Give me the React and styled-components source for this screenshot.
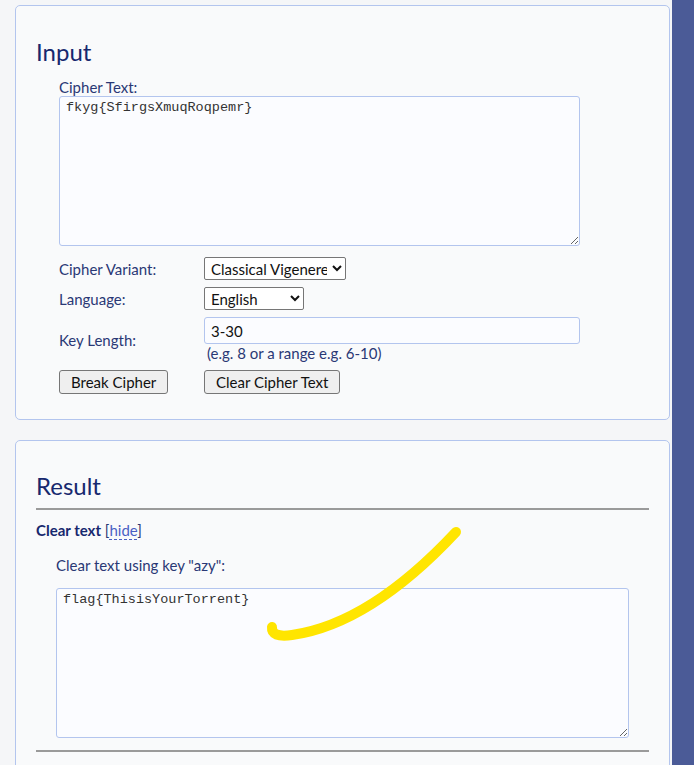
import React from "react";
import styled, { createGlobalStyle } from "styled-components";

const GlobalStyle = createGlobalStyle`
  html, body {
    margin: 0;
    padding: 0;
    background: #f5f6f8;
    font-family: "Lato", "Noto Sans", sans-serif;
  }
`;

const Page = styled.div`
  display: flex;
  min-height: 765px;
  position: relative;
  overflow: hidden;
`;

const Main = styled.div`
  flex: 1;
  padding: 5px 2px 0 15px;
  display: flex;
  flex-direction: column;
  gap: 20px;
`;

const SideStrip = styled.div`
  width: 22px;
  background: #4b5b97;
`;

const Panel = styled.section`
  border: 1px solid #b3c5ee;
  border-radius: 5px;
  background: #f9fafb;
  padding: 0 20px ${(p) => p.$bottom || 25}px;
`;

const Heading = styled.h2`
  font-weight: 400;
  font-size: 24px;
  line-height: 30px;
  color: #17286e;
  margin: ${(p) => p.$top || 31}px 0 0;
`;

const Fields = styled.div`
  margin-left: 23px;
  margin-top: 11px;
`;

const FieldLabel = styled.div`
  font-size: 15px;
  line-height: 18px;
  color: #2a3875;
`;

const Area = styled.textarea`
  display: block;
  box-sizing: border-box;
  width: ${(p) => p.$width}px;
  height: 150px;
  margin: 0;
  padding: 3px 6px;
  border: 1px solid #b3c5ee;
  border-radius: 3px;
  background: #fbfcff;
  font-family: "Liberation Mono", monospace;
  font-size: 13.5px;
  color: #333;
  resize: vertical;
`;

const Grid = styled.div`
  display: grid;
  grid-template-columns: 145px 1fr;
  align-items: center;
  row-gap: 7px;
  margin-top: 11px;
`;

const RowLabel = styled.div`
  font-size: 15px;
  color: #2a3875;
`;

const Select = styled.select`
  justify-self: start;
  box-sizing: border-box;
  height: 23px;
  width: ${(p) => p.$width}px;
  font-family: "Lato", sans-serif;
  font-size: 15px;
  color: #111;
  background: #fff;
  border: 1px solid #767676;
  border-radius: 2px;
  padding: 0 2px;
`;

const KeyBox = styled.div`
  display: flex;
  flex-direction: column;
`;

const TextInput = styled.input`
  box-sizing: border-box;
  width: 376px;
  height: 27px;
  margin: 0;
  padding: 0 6px;
  border: 1px solid #b3c5ee;
  border-radius: 3px;
  background: #fbfcff;
  font-family: "Lato", sans-serif;
  font-size: 15px;
  color: #111;
`;

const Hint = styled.div`
  font-size: 15px;
  line-height: 19px;
  color: #2a3875;
  padding-left: 3px;
`;

const Button = styled.button`
  justify-self: start;
  box-sizing: border-box;
  height: 24px;
  padding: 0 11px;
  font-family: "Lato", sans-serif;
  font-size: 15px;
  color: #111;
  background: #efefef;
  border: 1px solid #767676;
  border-radius: 3px;
`;

const Rule = styled.hr`
  border: none;
  border-top: 2px solid #9a9a9a;
  margin: ${(p) => p.$margin};
`;

const Toggle = styled.div`
  font-size: 15px;
  color: #2a3875;
`;

const Strong = styled.strong`
  color: #17286e;
`;

const HideLink = styled.a`
  color: #4a5fc4;
  text-decoration: none;
  border-bottom: 1px dashed #4a5fc4;
`;

const Indent = styled.div`
  margin-left: 20px;
  margin-top: 17px;
  display: flex;
  flex-direction: column;
  gap: 14px;
`;

const Mark = styled.svg`
  position: absolute;
  left: 0;
  top: 0;
  pointer-events: none;
`;

export default function App() {
  return (
    <>
      <GlobalStyle />
      <Page>
        <Main>
          <Panel $bottom={25}>
            <Heading>Input</Heading>
            <Fields>
              <FieldLabel>Cipher Text:</FieldLabel>
              <Area $width={521} defaultValue="fkyg{SfirgsXmuqRoqpemr}" />
              <Grid>
                <RowLabel>Cipher Variant:</RowLabel>
                <Select $width={142} defaultValue="classical">
                  <option value="classical">Classical Vigenere</option>
                </Select>
                <RowLabel>Language:</RowLabel>
                <Select $width={100} defaultValue="en">
                  <option value="en">English</option>
                </Select>
                <RowLabel>Key Length:</RowLabel>
                <KeyBox>
                  <TextInput defaultValue="3-30" />
                  <Hint>(e.g. 8 or a range e.g. 6-10)</Hint>
                </KeyBox>
                <Button>Break Cipher</Button>
                <Button>Clear Cipher Text</Button>
              </Grid>
            </Fields>
          </Panel>
          <Panel $bottom={60}>
            <Heading $top={30}>Result</Heading>
            <Rule $margin="7px 0 11px" />
            <Toggle>
              <Strong>Clear text</Strong> [<HideLink>hide</HideLink>]
            </Toggle>
            <Indent>
              <FieldLabel>Clear text using key "azy":</FieldLabel>
              <Area $width={573} defaultValue="flag{ThisisYourTorrent}" />
            </Indent>
            <Rule $margin="12px 0 0" />
          </Panel>
        </Main>
        <SideStrip />
        <Mark width="694" height="765">
          <path
            d="M272 627 Q271 638 292 635 Q370 624 456 532"
            fill="none"
            stroke="#ffe500"
            strokeWidth="10"
            strokeLinecap="round"
          />
        </Mark>
      </Page>
    </>
  );
}
